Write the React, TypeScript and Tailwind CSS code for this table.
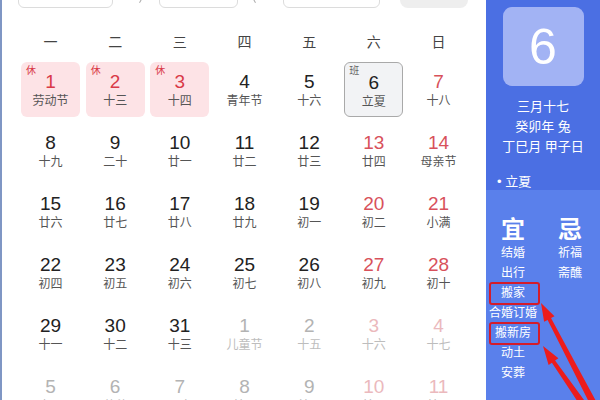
import React from "react";

type Day = {
  n: number;
  lunar: string;
  tone?: "red" | "dim" | "dimRed";
  rest?: boolean;
  work?: boolean;
};

const weeks: Day[][] = [
  [
    { n: 1, lunar: "劳动节", rest: true },
    { n: 2, lunar: "十三", rest: true },
    { n: 3, lunar: "十四", rest: true },
    { n: 4, lunar: "青年节" },
    { n: 5, lunar: "十六" },
    { n: 6, lunar: "立夏", work: true },
    { n: 7, lunar: "十八", tone: "red" },
  ],
  [
    { n: 8, lunar: "十九" },
    { n: 9, lunar: "二十" },
    { n: 10, lunar: "廿一" },
    { n: 11, lunar: "廿二" },
    { n: 12, lunar: "廿三" },
    { n: 13, lunar: "廿四", tone: "red" },
    { n: 14, lunar: "母亲节", tone: "red" },
  ],
  [
    { n: 15, lunar: "廿六" },
    { n: 16, lunar: "廿七" },
    { n: 17, lunar: "廿八" },
    { n: 18, lunar: "廿九" },
    { n: 19, lunar: "初一" },
    { n: 20, lunar: "初二", tone: "red" },
    { n: 21, lunar: "小满", tone: "red" },
  ],
  [
    { n: 22, lunar: "初四" },
    { n: 23, lunar: "初五" },
    { n: 24, lunar: "初六" },
    { n: 25, lunar: "初七" },
    { n: 26, lunar: "初八" },
    { n: 27, lunar: "初九", tone: "red" },
    { n: 28, lunar: "初十", tone: "red" },
  ],
  [
    { n: 29, lunar: "十一" },
    { n: 30, lunar: "十二" },
    { n: 31, lunar: "十三" },
    { n: 1, lunar: "儿童节", tone: "dim" },
    { n: 2, lunar: "十五", tone: "dim" },
    { n: 3, lunar: "十六", tone: "dimRed" },
    { n: 4, lunar: "十七", tone: "dimRed" },
  ],
  [
    { n: 5, lunar: "十八", tone: "dim" },
    { n: 6, lunar: "芒种", tone: "dim" },
    { n: 7, lunar: "二十", tone: "dim" },
    { n: 8, lunar: "廿一", tone: "dim" },
    { n: 9, lunar: "廿二", tone: "dim" },
    { n: 10, lunar: "廿三", tone: "dimRed" },
    { n: 11, lunar: "廿四", tone: "dimRed" },
  ],
];

const weekdays = ["一", "二", "三", "四", "五", "六", "日"];
const yi = ["结婚", "出行", "搬家", "合婚订婚", "搬新房", "动土", "安葬"];
const ji = ["祈福", "斋醮"];

export default function App() {
  return (
    <div
      className="relative flex h-[400px] w-[600px] overflow-hidden bg-white"
      style={{ fontFamily: '"Liberation Sans", "Noto Sans CJK SC", sans-serif' }}
    >
      {/* Calendar */}
      <div className="w-[486px] shrink-0 border-l-2 border-[#7f96c4]">
        {/* Toolbar (cut off at the top) */}
        <div className="-mt-[22px] flex h-[30px] items-stretch">
          <div className="ml-[16px] w-[95px] rounded-[6px] border border-[#dcdcdc] bg-white" />
          <div className="flex w-[46px] items-end pb-[5px] pl-[27px]">
            <span className="h-[4px] w-[1px] rotate-[30deg] bg-[#aaa]" />
          </div>
          <div className="w-[79px] rounded-[6px] border border-[#dcdcdc] bg-white" />
          <div className="flex w-[45px] items-end pb-[5px] pl-[16px]">
            <span className="h-[4px] w-[1px] -rotate-[30deg] bg-[#aaa]" />
          </div>
          <div className="w-[97px] rounded-[6px] border border-[#dcdcdc] bg-white" />
          <div className="ml-[20px] w-[68px] rounded-[8px] bg-[#eeeeee]" />
        </div>

        {/* Weekday header */}
        <div className="ml-[19px] mt-[24px] grid h-[20px] w-[447px] grid-cols-7 gap-x-[5.7px] text-center text-[14px] leading-[20px] text-[#444]">
          {weekdays.map((d) => (
            <div key={d}>{d}</div>
          ))}
        </div>

        {/* Days */}
        <div className="ml-[19px] mt-[10px] grid w-[447px] grid-cols-7 gap-x-[5.7px] gap-y-[6px]">
          {weeks.flat().map((d, i) => (
            <DayCell key={i} day={d} />
          ))}
        </div>
      </div>

      {/* Side panel */}
      <div className="flex w-[114px] shrink-0 flex-col">
        <div className="h-[190px] bg-[#4b6fe3] text-white">
          <div className="mx-auto mt-[7px] flex h-[79px] w-[81px] items-center justify-center rounded-[9px] bg-[#a2b3f4] text-[50px] leading-none">
            6
          </div>
          <div className="mt-[11px] text-center text-[13px] leading-[20px]">
            <div>三月十七</div>
            <div>癸卯年 兔</div>
            <div>丁巳月 甲子日</div>
          </div>
          <div className="mt-[15px] pl-[11px] text-[13px] leading-[20px]">• 立夏</div>
        </div>

        <div className="relative flex-1 bg-[#5a80eb] text-white">
          <div className="flex pt-[27px]">
            <div className="w-[54px] text-center">
              <div className="h-[26px] text-[24px] font-semibold leading-[26px]">宜</div>
              {yi.map((t) => (
                <div key={t} className="relative h-[20px] text-[12px] leading-[20px]">
                  {t}
                  {(t === "搬家" || t === "搬新房") && (
                    <span className="absolute -top-[1px] left-[3px] h-[23px] w-[51px] rounded-[3px] border-2 border-[#d41c2a]" />
                  )}
                </div>
              ))}
            </div>
            <div className="w-[60px] text-center">
              <div className="h-[26px] text-[24px] font-semibold leading-[26px]">忌</div>
              {ji.map((t) => (
                <div key={t} className="h-[20px] text-[12px] leading-[20px]">
                  {t}
                </div>
              ))}
            </div>
          </div>
        </div>
      </div>

      {/* Annotation arrows */}
      <svg
        className="pointer-events-none absolute left-0 top-0"
        width="600"
        height="400"
        viewBox="0 0 600 400"
      >
        <polygon
          points="541,303 554.5,316.3 551,318.1 603.2,414.4 596.8,417.6 547.6,319.9 544.1,321.7"
          fill="#ec1c1c"
        />
        <polygon
          points="543,346 558.4,358.3 555.1,360.4 592.8,412 587.2,416 551.9,362.8 548.6,365"
          fill="#ec1c1c"
        />
      </svg>
    </div>
  );
}

function DayCell({ day }: { day: Day }) {
  const numColor =
    day.rest
      ? "text-[#d93a48]"
      : day.tone === "red"
      ? "text-[#d8515b]"
      : day.tone === "dim"
      ? "text-[#b3b3b3]"
      : day.tone === "dimRed"
      ? "text-[#ebb9bd]"
      : "text-[#222]";
  const lunarColor =
    day.tone === "dim" || day.tone === "dimRed" ? "text-[#bdbdbd]" : "text-[#555]";
  const box = day.rest
    ? "bg-[#fde3e6]"
    : day.work
    ? "bg-[#f2f3f5] border-[1.5px] border-[#a9a9a9]"
    : "";

  return (
    <div className={`relative flex h-[55px] flex-col items-center rounded-[6px] ${box}`}>
      {day.rest && (
        <span className="absolute left-[5px] top-[3px] text-[10px] leading-[12px] text-[#d93a48]">休</span>
      )}
      {day.work && (
        <span className="absolute left-[4px] top-[2px] text-[10px] leading-[12px] text-[#666]">班</span>
      )}
      <div className={`pt-[9px] text-[19px] leading-[22px] ${numColor}`}>{day.n}</div>
      <div className={`text-[12px] leading-[16px] ${lunarColor}`}>{day.lunar}</div>
    </div>
  );
}
